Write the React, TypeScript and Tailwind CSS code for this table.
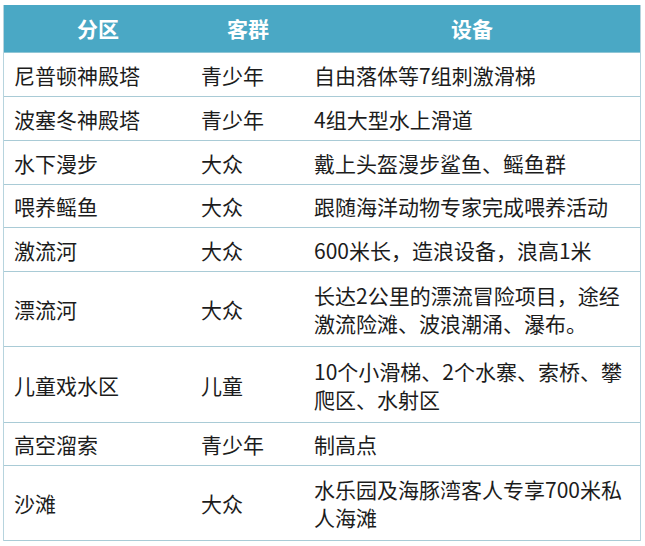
const rows: { zone: string; group: string; gear: string[]; h: string }[] = [
  { zone: '尼普顿神殿塔', group: '青少年', gear: ['自由落体等7组刺激滑梯'], h: 'h-[44px]' },
  { zone: '波塞冬神殿塔', group: '青少年', gear: ['4组大型水上滑道'], h: 'h-[44px]' },
  { zone: '水下漫步', group: '大众', gear: ['戴上头盔漫步鲨鱼、鳐鱼群'], h: 'h-[44px]' },
  { zone: '喂养鳐鱼', group: '大众', gear: ['跟随海洋动物专家完成喂养活动'], h: 'h-[43px]' },
  { zone: '激流河', group: '大众', gear: ['600米长，造浪设备，浪高1米'], h: 'h-[44px]' },
  { zone: '漂流河', group: '大众', gear: ['长达2公里的漂流冒险项目，途经', '激流险滩、波浪潮涌、瀑布。'], h: 'h-[75px]' },
  { zone: '儿童戏水区', group: '儿童', gear: ['10个小滑梯、2个水寨、索桥、攀', '爬区、水射区'], h: 'h-[76px]' },
  { zone: '高空溜索', group: '青少年', gear: ['制高点'], h: 'h-[43px]' },
  { zone: '沙滩', group: '大众', gear: ['水乐园及海豚湾客人专享700米私', '人海滩'], h: 'h-[75px]' },
]

export default function App() {
  return (
    <div className="w-[645px] h-[546px] bg-white pt-[5px] pl-[3px] font-['Noto_Sans_CJK_SC',sans-serif]">
      <div className="w-[638px] border-x border-[#b7d4de]">
        <div className="grid grid-cols-[188px_112px_1fr] h-[48px] items-center bg-[#4aa8c5] border-b border-[#8fc6d6] text-white font-bold text-[21px]">
          <div className="text-center">分区</div>
          <div className="text-center">客群</div>
          <div className="text-center">设备</div>
        </div>
        {rows.map((r) => (
          <div
            key={r.zone}
            className={`grid grid-cols-[188px_112px_1fr] items-center border-b border-[#a9cbd6] text-[#1c1c1c] text-[21px] ${r.h}`}
          >
            <div className="pl-[10px] leading-[28px]">{r.zone}</div>
            <div className="pl-[9px] leading-[28px]">{r.group}</div>
            <div className="pl-[10px] leading-[28px] whitespace-nowrap">
              {r.gear.map((line) => (
                <div key={line}>{line}</div>
              ))}
            </div>
          </div>
        ))}
      </div>
    </div>
  )
}
